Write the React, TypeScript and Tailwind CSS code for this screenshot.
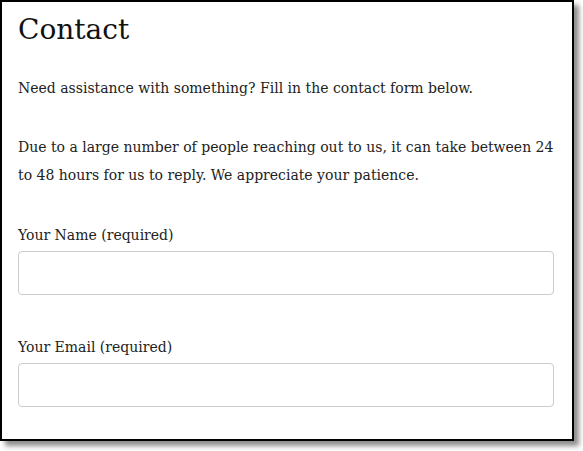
export default function App() {
  return (
    <div className="w-[583px] h-[451px] bg-white">
      <div
        className="w-[574px] h-[441px] border-2 border-black bg-white pl-4 pr-[18px] shadow-[5px_5px_5px_rgba(0,0,0,0.45)] text-[#222]"
        style={{ fontFamily: '"DejaVu Serif", serif' }}
      >
        <h1 className="text-[28px] leading-none pt-[14px] text-[#111]">Contact</h1>

        <p className="text-[14px] leading-[28px] mt-[30px]">
          Need assistance with something? Fill in the contact form below.
        </p>
        <p className="text-[14px] leading-[28px] mt-[31px]">
          Due to a large number of people reaching out to us, it can take between 24 to 48 hours for us to
          reply. We appreciate your patience.
        </p>

        <div className="mt-[32px]">
          <label className="block text-[14px] leading-[28px]">Your Name (required)</label>
          <input className="mt-[2px] block w-full h-[44px] border border-[#ccc] rounded-[4px]" />
        </div>

        <div className="mt-[38px]">
          <label className="block text-[14px] leading-[28px]">Your Email (required)</label>
          <input className="mt-[2px] block w-full h-[44px] border border-[#ccc] rounded-[4px]" />
        </div>
      </div>
    </div>
  )
}
